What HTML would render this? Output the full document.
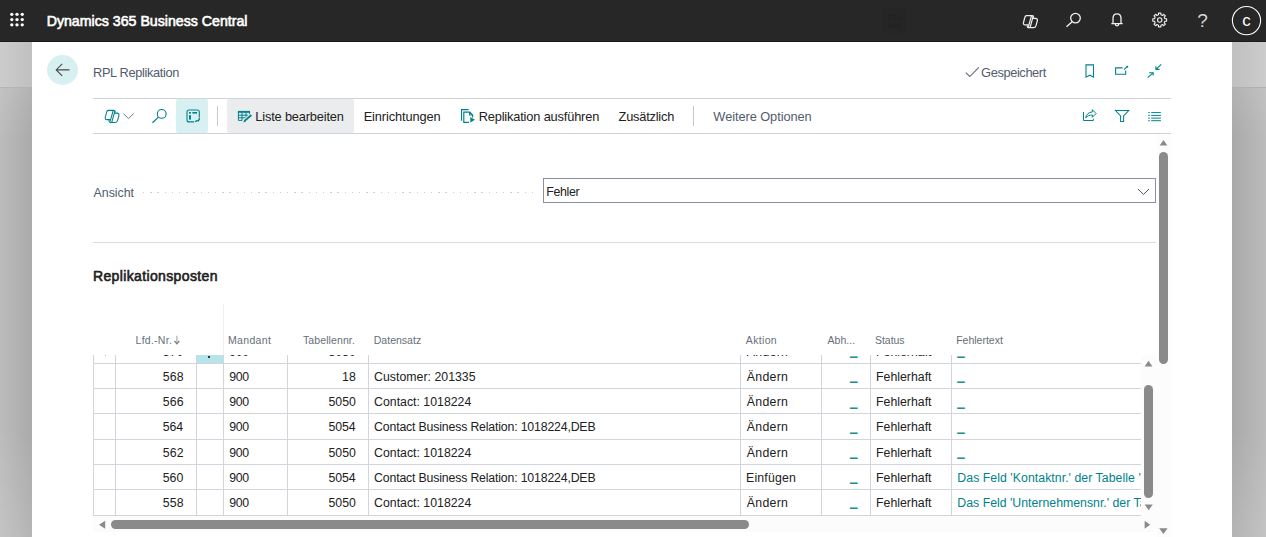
<!DOCTYPE html><html lang="de"><head><meta charset="utf-8"><title>RPL Replikation</title><style>
*{box-sizing:border-box}
html,body{margin:0;padding:0}
body{width:1266px;height:537px;overflow:hidden;position:relative;font-family:"Liberation Sans",sans-serif;background:#c0c0c0}
.a{position:absolute}
.t{position:absolute;white-space:pre;line-height:1;display:block}
svg{position:absolute;left:0;top:0;overflow:visible}
#hdr{left:0;top:0;width:1266px;height:42px;background:#272727;border-bottom:1px solid #1b1b1b}
#stripL1{left:0;top:42px;width:32px;height:45px;background:linear-gradient(90deg,#cccccc,#c0c0c0)}
#stripL2{left:0;top:88px;width:32px;height:449px;background:linear-gradient(180deg,rgba(255,255,255,.10) 0,rgba(255,255,255,0) 50px,rgba(255,255,255,0) 340px,rgba(255,255,255,.13) 450px),linear-gradient(90deg,#bcbcbc,#aaaaaa)}
#stripR1{left:1232px;top:42px;width:34px;height:45px;background:linear-gradient(90deg,#c0c0c0,#cccccc)}
#stripR2{left:1232px;top:88px;width:34px;height:449px;background:linear-gradient(180deg,rgba(255,255,255,.10) 0,rgba(255,255,255,0) 50px,rgba(255,255,255,0) 340px,rgba(255,255,255,.13) 450px),linear-gradient(90deg,#a9a9a9,#bbbbbb)}
#panel{left:32px;top:42px;width:1200px;height:496px;background:#fff}
.hl{height:1px;background:#d0d4d9}
.vl{width:1px;background:#d3d5dc}
#tclip{left:93px;top:355px;width:1048px;height:161px;overflow:hidden}
#tin{left:-93px;top:-355px;width:1266px;height:537px}
</style></head><body>
<div class="a" id="stripL1"></div><div class="a" id="stripL2"></div><div class="a" id="stripR1"></div><div class="a" id="stripR2"></div>
<div class="a" style="left:0;top:87px;width:32px;height:1px;background:#b4b4b4"></div><div class="a" style="left:1232px;top:87px;width:34px;height:1px;background:#b0b0b0"></div>
<div class="a" id="panel"></div>
<header>
<div class="a" id="hdr"></div>
<div class="a" style="left:882.1px;top:7.9px;width:24.9px;height:24.9px;background:#252525"></div>
<span class="t" style="left:887.6px;top:13.6px;font-size:8px;font-weight:700;color:#222222;letter-spacing:-0.2px">STA</span><span class="t" style="left:887.6px;top:21.7px;font-size:8px;font-weight:700;color:#222222;letter-spacing:0.6px">MM</span>
<span class="t" style="left:46.66px;top:13.98px;font-size:14.2px;color:#ffffff;letter-spacing:-0.008px;-webkit-text-stroke:0.6px #ffffff;">Dynamics 365 Business Central</span>
<span class="t" style="left:1242.17px;top:13.48px;font-size:16.8px;color:#ffffff;letter-spacing:0.000px;">c</span>
<span class="t" style="left:1197.37px;top:11.02px;font-size:19px;color:#d6d6d6;letter-spacing:0.000px;">?</span>
</header>
<main>
<div class="a" style="left:176px;top:99px;width:32px;height:34px;border-radius:2px;background:#d9f0f2"></div>
<div class="a" style="left:227px;top:99px;width:127px;height:34px;background:#ebecee;border-radius:2px"></div>
<div class="a hl" style="left:93px;top:98px;width:1078px"></div>
<div class="a hl" style="left:93px;top:133px;width:1078px"></div>
<div class="a hl" style="left:93px;top:242px;width:1063px;background:#dcdcdc"></div>
<div class="a" style="left:217px;top:106px;width:1px;height:20px;background:#c6c9d0"></div>
<div class="a" style="left:693px;top:106px;width:1px;height:20px;background:#c6c9d0"></div>
<div class="a" style="left:47px;top:54.8px;width:31px;height:30.2px;border-radius:50%;background:#d9f0f2"></div>
<div class="a" style="left:543px;top:178px;width:613px;height:25px;border:1px solid #8690a0;background:#fff"></div>
<div class="a" style="left:143px;top:192px;width:391px;height:1.3px;background:repeating-linear-gradient(90deg,#cdcdcd 0,#cdcdcd 1.4px,transparent 1.4px,transparent 7.2px)"></div>
<div class="a" style="left:1156.6px;top:134px;width:14.4px;height:403px;background:#fcfcfc"></div>
<div class="a" style="left:1141px;top:355px;width:15.6px;height:177px;background:#fcfcfc"></div>
<div class="a" style="left:93px;top:516px;width:1063px;height:16px;background:#fcfcfc"></div>
<div class="a" style="left:1159px;top:151.7px;width:9px;height:212.1px;border-radius:4.5px;background:#8a8a8a"></div>
<div class="a" style="left:1144px;top:385px;width:9px;height:113px;border-radius:4.5px;background:#8a8a8a"></div>
<div class="a" style="left:110.8px;top:520.2px;width:638.5px;height:8.7px;border-radius:4.4px;background:#8a8a8a"></div>
<div class="a" id="tclip"><div class="a" id="tin">
<div class="a" style="left:196.8px;top:338.4px;width:26.6px;height:25px;background:#b3e5ea"></div>
<div class="a" style="left:208.3px;top:356px;width:1.8px;height:2px;background:#333"></div>
<div class="a" style="left:105.2px;top:355.4px;width:1.2px;height:1px;background:#dfae90"></div>
<div class="a hl" style="left:93px;top:363px;width:1048px;background:#d3d5dc"></div>
<div class="a hl" style="left:93px;top:388px;width:1048px;background:#d3d5dc"></div>
<div class="a hl" style="left:93px;top:413px;width:1048px;background:#d3d5dc"></div>
<div class="a hl" style="left:93px;top:439px;width:1048px;background:#d3d5dc"></div>
<div class="a hl" style="left:93px;top:464px;width:1048px;background:#d3d5dc"></div>
<div class="a hl" style="left:93px;top:489px;width:1048px;background:#d3d5dc"></div>
<div class="a hl" style="left:93px;top:515px;width:1048px;background:#d3d5dc"></div>
<div class="a vl" style="left:93px;top:354px;height:162px"></div>
<div class="a vl" style="left:115px;top:354px;height:162px"></div>
<div class="a vl" style="left:196px;top:354px;height:162px"></div>
<div class="a vl" style="left:223px;top:354px;height:162px"></div>
<div class="a vl" style="left:287px;top:354px;height:162px"></div>
<div class="a vl" style="left:368px;top:354px;height:162px"></div>
<div class="a vl" style="left:740px;top:354px;height:162px"></div>
<div class="a vl" style="left:821px;top:354px;height:162px"></div>
<div class="a vl" style="left:870px;top:354px;height:162px"></div>
<div class="a vl" style="left:951px;top:354px;height:162px"></div>
<span class="t row" style="left:162.65px;top:346.09px;font-size:12.3px;color:#212121;letter-spacing:0.104px;">570</span>
<span class="t row" style="left:229.26px;top:346.09px;font-size:12.3px;color:#212121;letter-spacing:-0.316px;">900</span>
<span class="t row" style="left:328.51px;top:346.09px;font-size:12.3px;color:#212121;letter-spacing:-0.021px;">5050</span>
<span class="t row" style="left:746.72px;top:346.09px;font-size:12.3px;color:#212121;letter-spacing:0.313px;">Ändern</span>
<span class="t row" style="left:876.03px;top:346.09px;font-size:12.3px;color:#212121;letter-spacing:0.012px;">Fehlerhaft</span>
<span class="t row" style="left:162.65px;top:371.29px;font-size:12.3px;color:#212121;letter-spacing:0.198px;">568</span>
<span class="t row" style="left:229.26px;top:371.29px;font-size:12.3px;color:#212121;letter-spacing:-0.316px;">900</span>
<span class="t row" style="left:341.96px;top:371.29px;font-size:12.3px;color:#212121;letter-spacing:0.196px;">18</span>
<span class="t row" style="left:374.11px;top:371.29px;font-size:12.3px;color:#212121;letter-spacing:0.019px;">Customer: 201335</span>
<span class="t row" style="left:746.72px;top:371.29px;font-size:12.3px;color:#212121;letter-spacing:0.313px;">Ändern</span>
<span class="t row" style="left:876.03px;top:371.29px;font-size:12.3px;color:#212121;letter-spacing:0.012px;">Fehlerhaft</span>
<span class="t row" style="left:162.65px;top:396.49px;font-size:12.3px;color:#212121;letter-spacing:0.229px;">566</span>
<span class="t row" style="left:229.26px;top:396.49px;font-size:12.3px;color:#212121;letter-spacing:-0.316px;">900</span>
<span class="t row" style="left:328.51px;top:396.49px;font-size:12.3px;color:#212121;letter-spacing:-0.021px;">5050</span>
<span class="t row" style="left:374.11px;top:396.49px;font-size:12.3px;color:#212121;letter-spacing:0.004px;">Contact: 1018224</span>
<span class="t row" style="left:746.72px;top:396.49px;font-size:12.3px;color:#212121;letter-spacing:0.313px;">Ändern</span>
<span class="t row" style="left:876.03px;top:396.49px;font-size:12.3px;color:#212121;letter-spacing:0.012px;">Fehlerhaft</span>
<span class="t row" style="left:162.65px;top:420.69px;font-size:12.3px;color:#212121;letter-spacing:-0.084px;">564</span>
<span class="t row" style="left:229.26px;top:420.69px;font-size:12.3px;color:#212121;letter-spacing:-0.316px;">900</span>
<span class="t row" style="left:328.51px;top:420.69px;font-size:12.3px;color:#212121;letter-spacing:-0.115px;">5054</span>
<span class="t row" style="left:374.11px;top:420.69px;font-size:12.3px;color:#212121;letter-spacing:-0.166px;">Contact Business Relation: 1018224,DEB</span>
<span class="t row" style="left:746.72px;top:420.69px;font-size:12.3px;color:#212121;letter-spacing:0.313px;">Ändern</span>
<span class="t row" style="left:876.03px;top:420.69px;font-size:12.3px;color:#212121;letter-spacing:0.012px;">Fehlerhaft</span>
<span class="t row" style="left:162.65px;top:446.89px;font-size:12.3px;color:#212121;letter-spacing:0.196px;">562</span>
<span class="t row" style="left:229.26px;top:446.89px;font-size:12.3px;color:#212121;letter-spacing:-0.316px;">900</span>
<span class="t row" style="left:328.51px;top:446.89px;font-size:12.3px;color:#212121;letter-spacing:-0.021px;">5050</span>
<span class="t row" style="left:374.11px;top:446.89px;font-size:12.3px;color:#212121;letter-spacing:0.004px;">Contact: 1018224</span>
<span class="t row" style="left:746.72px;top:446.89px;font-size:12.3px;color:#212121;letter-spacing:0.313px;">Ändern</span>
<span class="t row" style="left:876.03px;top:446.89px;font-size:12.3px;color:#212121;letter-spacing:0.012px;">Fehlerhaft</span>
<span class="t row" style="left:162.65px;top:472.09px;font-size:12.3px;color:#212121;letter-spacing:0.104px;">560</span>
<span class="t row" style="left:229.26px;top:472.09px;font-size:12.3px;color:#212121;letter-spacing:-0.316px;">900</span>
<span class="t row" style="left:328.51px;top:472.09px;font-size:12.3px;color:#212121;letter-spacing:-0.115px;">5054</span>
<span class="t row" style="left:374.11px;top:472.09px;font-size:12.3px;color:#212121;letter-spacing:-0.166px;">Contact Business Relation: 1018224,DEB</span>
<span class="t row" style="left:746.03px;top:472.09px;font-size:12.3px;color:#212121;letter-spacing:0.183px;">Einfügen</span>
<span class="t row" style="left:876.03px;top:472.09px;font-size:12.3px;color:#212121;letter-spacing:0.012px;">Fehlerhaft</span>
<span class="t row long" style="left:957.33px;top:472.09px;font-size:12.3px;color:#00838a;letter-spacing:0.047px;">Das Feld 'Kontaktnr.' der Tabelle 'Contact Business Relation' darf nicht leer sein.</span>
<span class="t row" style="left:162.65px;top:497.29px;font-size:12.3px;color:#212121;letter-spacing:0.198px;">558</span>
<span class="t row" style="left:229.26px;top:497.29px;font-size:12.3px;color:#212121;letter-spacing:-0.316px;">900</span>
<span class="t row" style="left:328.51px;top:497.29px;font-size:12.3px;color:#212121;letter-spacing:-0.021px;">5050</span>
<span class="t row" style="left:374.11px;top:497.29px;font-size:12.3px;color:#212121;letter-spacing:0.004px;">Contact: 1018224</span>
<span class="t row" style="left:746.72px;top:497.29px;font-size:12.3px;color:#212121;letter-spacing:0.313px;">Ändern</span>
<span class="t row" style="left:876.03px;top:497.29px;font-size:12.3px;color:#212121;letter-spacing:0.012px;">Fehlerhaft</span>
<span class="t row long" style="left:957.33px;top:497.29px;font-size:12.3px;color:#00838a;letter-spacing:0.005px;">Das Feld 'Unternehmensnr.' der Tabelle 'Contact' darf nicht leer sein.</span>
<span class="t" style="left:850.1px;top:344.16px;font-size:13.4px;color:#00838a;text-shadow:0 -1px 0 rgba(0,131,138,.6)">_</span>
<span class="t" style="left:957.2px;top:344.16px;font-size:13.4px;color:#00838a;text-shadow:0 -1px 0 rgba(0,131,138,.6)">_</span>
<span class="t" style="left:850.1px;top:369.36px;font-size:13.4px;color:#00838a;text-shadow:0 -1px 0 rgba(0,131,138,.6)">_</span>
<span class="t" style="left:957.2px;top:369.36px;font-size:13.4px;color:#00838a;text-shadow:0 -1px 0 rgba(0,131,138,.6)">_</span>
<span class="t" style="left:850.1px;top:394.56px;font-size:13.4px;color:#00838a;text-shadow:0 -1px 0 rgba(0,131,138,.6)">_</span>
<span class="t" style="left:957.2px;top:394.56px;font-size:13.4px;color:#00838a;text-shadow:0 -1px 0 rgba(0,131,138,.6)">_</span>
<span class="t" style="left:850.1px;top:419.76px;font-size:13.4px;color:#00838a;text-shadow:0 -1px 0 rgba(0,131,138,.6)">_</span>
<span class="t" style="left:957.2px;top:419.76px;font-size:13.4px;color:#00838a;text-shadow:0 -1px 0 rgba(0,131,138,.6)">_</span>
<span class="t" style="left:850.1px;top:444.96px;font-size:13.4px;color:#00838a;text-shadow:0 -1px 0 rgba(0,131,138,.6)">_</span>
<span class="t" style="left:957.2px;top:444.96px;font-size:13.4px;color:#00838a;text-shadow:0 -1px 0 rgba(0,131,138,.6)">_</span>
<span class="t" style="left:850.1px;top:470.16px;font-size:13.4px;color:#00838a;text-shadow:0 -1px 0 rgba(0,131,138,.6)">_</span>
<span class="t" style="left:850.1px;top:495.36px;font-size:13.4px;color:#00838a;text-shadow:0 -1px 0 rgba(0,131,138,.6)">_</span>
</div></div>
<div class="a" style="left:223px;top:304px;width:1px;height:51px;background:#f0f0f3"></div>
<span class="t" style="left:93.01px;top:67.16px;font-size:12.8px;color:#505c6d;letter-spacing:-0.359px;">RPL Replikation</span>
<span class="t" style="left:981.08px;top:66.66px;font-size:12.8px;color:#505c6d;letter-spacing:-0.378px;">Gespeichert</span>
<span class="t" style="left:255.27px;top:110.91px;font-size:12.8px;color:#212121;letter-spacing:-0.159px;">Liste bearbeiten</span>
<span class="t" style="left:363.64px;top:110.91px;font-size:12.8px;color:#212121;letter-spacing:-0.110px;">Einrichtungen</span>
<span class="t" style="left:478.64px;top:110.91px;font-size:12.8px;color:#212121;letter-spacing:-0.155px;">Replikation ausführen</span>
<span class="t" style="left:618.59px;top:110.91px;font-size:12.8px;color:#212121;letter-spacing:-0.215px;">Zusätzlich</span>
<span class="t" style="left:713.37px;top:110.91px;font-size:12.8px;color:#505c6d;letter-spacing:-0.067px;">Weitere Optionen</span>
<span class="t" style="left:93.52px;top:187.10px;font-size:12.4px;color:#505c6d;letter-spacing:-0.020px;">Ansicht</span>
<span class="t" style="left:546.18px;top:185.50px;font-size:12.4px;color:#212121;letter-spacing:-0.325px;">Fehler</span>
<span class="t" style="left:93.01px;top:269.05px;font-size:14.0px;color:#212121;letter-spacing:0.363px;-webkit-text-stroke:0.6px #212121;">Replikationsposten</span>
<span class="t hd" style="left:135.55px;top:334.91px;font-size:10.5px;color:#666f7c;letter-spacing:0.262px;">Lfd.-Nr.</span>
<span class="t hd" style="left:227.94px;top:334.91px;font-size:10.5px;color:#666f7c;letter-spacing:0.347px;">Mandant</span>
<span class="t hd" style="left:303.02px;top:334.91px;font-size:10.5px;color:#666f7c;letter-spacing:0.100px;">Tabellennr.</span>
<span class="t hd" style="left:373.75px;top:334.91px;font-size:10.5px;color:#666f7c;letter-spacing:0.015px;">Datensatz</span>
<span class="t hd" style="left:745.81px;top:334.91px;font-size:10.5px;color:#666f7c;letter-spacing:0.344px;">Aktion</span>
<span class="t hd" style="left:827.45px;top:334.91px;font-size:10.5px;color:#666f7c;letter-spacing:0.066px;">Abh...</span>
<span class="t hd" style="left:875.04px;top:334.91px;font-size:10.5px;color:#666f7c;letter-spacing:-0.054px;">Status</span>
<span class="t hd" style="left:956.15px;top:334.91px;font-size:10.5px;color:#666f7c;letter-spacing:-0.003px;">Fehlertext</span>
</main>
<svg aria-hidden="true" width="1266" height="537" viewBox="0 0 1266 537" fill="none" stroke-linecap="butt" stroke-linejoin="miter"><circle cx="11.8" cy="14.35" r="1.65" fill="#fff"/><circle cx="11.8" cy="19.55" r="1.65" fill="#fff"/><circle cx="11.8" cy="24.8" r="1.65" fill="#fff"/><circle cx="17.0" cy="14.35" r="1.65" fill="#fff"/><circle cx="17.0" cy="19.55" r="1.65" fill="#fff"/><circle cx="17.0" cy="24.8" r="1.65" fill="#fff"/><circle cx="22.25" cy="14.35" r="1.65" fill="#fff"/><circle cx="22.25" cy="19.55" r="1.65" fill="#fff"/><circle cx="22.25" cy="24.8" r="1.65" fill="#fff"/><g transform="translate(1022.9,14.9) scale(1.0)" stroke="#f0f0f0" stroke-width="1.25" stroke-linejoin="round" stroke-linecap="round"><path d="M9 0.6 H3.6 C2.8 0.6 2.2 1.3 1.9 2.6 L0.6 7.6 C0.2 9 0.8 10 2.2 10 H5.4"/><path d="M8.6 0.7 L5.6 11.4 M10.3 1.3 L7.3 12.3"/><path d="M9 0.6 C10 0.6 10.6 1.4 10.5 2.4"/><path d="M10 3.4 H12.6 C14.2 3.4 14.8 4.5 14.4 6 L13 11 C12.6 12.2 11.8 12.8 10.6 12.8 H6 C4.9 12.8 4.3 12.1 4.4 11"/></g><circle cx="1075.5" cy="18.1" r="4.8" stroke="#f0f0f0" stroke-width="1.3"/><path d="M1072.1 21.7 L1066.5 26.8" stroke="#f0f0f0" stroke-width="1.4"/><path d="M1113 23.4 V18.4 C1113 15.6 1114.8 13.9 1117 13.9 C1119.2 13.9 1121 15.6 1121 18.4 V23.4 M1111.3 23.6 H1122.7 M1115.2 24.2 C1115.6 25.4 1116.2 25.9 1117 25.9 C1117.8 25.9 1118.4 25.4 1118.8 24.2" stroke="#f0f0f0" stroke-width="1.3"/><path d="M1166.60 18.80 L1166.60 21.20 L1164.85 21.24 L1164.22 22.77 L1165.43 24.03 L1163.73 25.73 L1162.47 24.52 L1160.94 25.15 L1160.90 26.90 L1158.50 26.90 L1158.46 25.15 L1156.93 24.52 L1155.67 25.73 L1153.97 24.03 L1155.18 22.77 L1154.55 21.24 L1152.80 21.20 L1152.80 18.80 L1154.55 18.76 L1155.18 17.23 L1153.97 15.97 L1155.67 14.27 L1156.93 15.48 L1158.46 14.85 L1158.50 13.10 L1160.90 13.10 L1160.94 14.85 L1162.47 15.48 L1163.73 14.27 L1165.43 15.97 L1164.22 17.23 L1164.85 18.76 Z" stroke="#f0f0f0" stroke-width="1.1" stroke-linejoin="round"/><circle cx="1159.7" cy="20.0" r="2.2" stroke="#f0f0f0" stroke-width="1.1"/><circle cx="1246.5" cy="20.6" r="14.1" stroke="#fff" stroke-width="1.1"/><path d="M56.2 69.9 H69.5 M62.2 63.9 L56.2 69.9 L62.2 75.9" stroke="#4a4a4a" stroke-width="1.1"/><path d="M965.8 72.7 L969.8 76.5 L978.9 67.4" stroke="#5f6a7b" stroke-width="1.05"/><path d="M1086 64.9 H1093.5 V77.2 L1089.75 75.2 L1086 77.2 Z" stroke="#00838a" stroke-width="1.1"/><path d="M1122.6 67.9 H1115.6 V74.3 H1125.7 V70.6" stroke="#00838a" stroke-width="1.1"/><path d="M1124 69.7 L1127 66.9" stroke="#00838a" stroke-width="1.1"/><circle cx="1127.3" cy="66.8" r="1" fill="#00838a"/><path d="M1161.2 64.4 L1156 69.3 M1155.9 66.2 V69.4 H1159.6 M1147.7 77.7 L1153.1 72.8 M1149.2 72.7 H1153.2 V75.6" stroke="#00838a" stroke-width="1.1"/><g transform="translate(104.7,109.8) scale(0.985)" stroke="#00838a" stroke-width="1.07" stroke-linejoin="round" stroke-linecap="round"><path d="M9 0.6 H3.6 C2.8 0.6 2.2 1.3 1.9 2.6 L0.6 7.6 C0.2 9 0.8 10 2.2 10 H5.4"/><path d="M8.6 0.7 L5.6 11.4 M10.3 1.3 L7.3 12.3"/><path d="M9 0.6 C10 0.6 10.6 1.4 10.5 2.4"/><path d="M10 3.4 H12.6 C14.2 3.4 14.8 4.5 14.4 6 L13 11 C12.6 12.2 11.8 12.8 10.6 12.8 H6 C4.9 12.8 4.3 12.1 4.4 11"/></g><path d="M123.3 113.5 L128.5 118.6 L133.7 113.5" stroke="#7a7a7a" stroke-width="1"/><circle cx="161.7" cy="113.9" r="4.4" stroke="#00838a" stroke-width="1.1"/><path d="M158.4 117.1 L152.4 122.8" stroke="#00838a" stroke-width="1.2"/><path d="M194.2 121.9 H189 C187.8 121.9 187 121.1 187 119.9 V112 C187 110.8 187.8 110 189 110 H197.3 C198.5 110 199.3 110.8 199.3 112 V117" stroke="#00838a" stroke-width="1.1"/><rect x="189" y="112" width="2" height="1.6" fill="#00838a"/><rect x="192.4" y="112" width="4.6" height="1.6" fill="#00838a"/><rect x="189" y="115.2" width="2" height="4.4" fill="#00838a"/><path d="M199.3 117.6 V119.2 M195.2 121.6 L197.6 120.4 M198 121.4 L199.6 118.6" stroke="#00838a" stroke-width="1.3"/><rect x="237.9" y="110.9" width="12.1" height="1.9" fill="#00838a"/><path d="M238.4 112 V120.4 H245 M238 115.2 H248.5 M238 117.8 H246 M242 112 V120.4 M246 112 V116.8 M249.6 112 V114" stroke="#00838a" stroke-width="1"/><path d="M252.2 114.2 L242.4 122.8" stroke="#ebecee" stroke-width="3.6"/><path d="M251.4 115 L244.6 120.9" stroke="#00838a" stroke-width="1.9"/><path d="M244.9 119.6 L242.9 122.4 L246.2 121.2 Z" fill="#00838a"/><path d="M468.6 109.55 H461.55 V120.8" stroke="#00838a" stroke-width="1.15"/><path d="M469 122.35 H463.8 V112.1 H469.8 L472.65 114.9 V117.4 M469.6 112.2 V115 H472.4" stroke="#00838a" stroke-width="1.15"/><path d="M470.3 116.9 L475 119.7 L470.3 122.6 Z" fill="#00838a"/><path d="M1083.5 112 V120.5 H1093.4 V118.8" stroke="#00838a" stroke-width="1"/><path d="M1085.7 117.9 C1086.2 114.4 1088.6 112.2 1092.3 112 V109.7 L1096.1 113.5 L1092.3 117.3 V115 C1089.4 115 1087.4 115.9 1085.7 117.9 Z" stroke="#00838a" stroke-width="1" stroke-linejoin="round"/><path d="M1115.5 110.5 H1128.7 L1123.6 115.9 V121.4 H1120.6 V115.9 Z" stroke="#00838a" stroke-width="1.05"/><path d="M1148.2 112.6 H1149.8 M1151.2 112.6 H1160.9" stroke="#00838a" stroke-width="1"/><path d="M1148.2 115.4 H1149.8 M1151.2 115.4 H1160.9" stroke="#00838a" stroke-width="1"/><path d="M1148.2 118.1 H1149.8 M1151.2 118.1 H1160.9" stroke="#00838a" stroke-width="1"/><path d="M1148.2 120.7 H1149.8 M1151.2 120.7 H1160.9" stroke="#00838a" stroke-width="1"/><path d="M176.9 335.8 V343.4" stroke="#a4a7ac" stroke-width="1.1"/><path d="M174.5 341 L176.9 343.8 L179.3 341" stroke="#7a7e85" stroke-width="1.3"/><path d="M1138 189 L1143.5 194.5 L1149 189" stroke="#555" stroke-width="1"/><path d="M1159.6 145.6 L1163.5 140 L1167.4 145.6 Z" fill="#8a8a8a"/><path d="M1159.2 528.2 L1163.4 534 L1167.6 528.2 Z" fill="#8a8a8a"/><path d="M1144.6 366.4 L1148.5 360.8 L1152.4 366.4 Z" fill="#8a8a8a"/><path d="M1144.6 504.4 L1148.7 510.2 L1152.8 504.4 Z" fill="#8a8a8a"/><path d="M105.2 520.8 L99 524.8 L105.2 528.8 Z" fill="#8a8a8a"/><path d="M1144.6 520.8 L1150.2 524.8 L1144.6 528.8 Z" fill="#8a8a8a"/></svg>
</body></html>
